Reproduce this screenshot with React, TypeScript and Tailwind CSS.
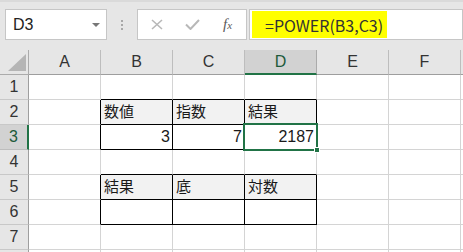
const COLS = ["A", "B", "C", "D", "E", "F", ""];
const ROWS = [1, 2, 3, 4, 5, 6, 7, 8];

// tables drawn with black borders: [firstRow, lastRow, firstCol, lastCol] (col 0 = A)
const TABLES = [
  [2, 3, 1, 3],
  [5, 6, 1, 3],
];

const DATA: Record<string, string> = {
  "2-1": "数値",
  "2-2": "指数",
  "2-3": "結果",
  "3-1": "3",
  "3-2": "7",
  "3-3": "2187",
  "5-1": "結果",
  "5-2": "底",
  "5-3": "対数",
};

const inTable = (r: number, c: number) =>
  TABLES.some(([r0, r1, c0, c1]) => r >= r0 && r <= r1 && c >= c0 && c <= c1);

const isHead = (r: number, c: number) => inTable(r, c) && (r === 2 || r === 5);

function Cell({ r, c }: { r: number; c: number }) {
  const right = inTable(r, c) || inTable(r, c + 1);
  const bottom = inTable(r, c) || inTable(r + 1, c);
  const text = DATA[`${r}-${c}`];
  const numeric = text !== undefined && /^\d+$/.test(text);
  return (
    <div
      className={[
        "w-[72px] h-[25px] shrink-0 border-r border-b flex items-center overflow-hidden",
        right ? "border-r-black" : "border-r-[#d4d4d4]",
        bottom ? "border-b-black" : "border-b-[#d4d4d4]",
        isHead(r, c) ? "bg-[#f2f2f2]" : "bg-white",
        numeric ? "justify-end pr-[2px] text-[16px]" : "justify-start pl-[3px] text-[15px]",
      ].join(" ")}
    >
      {text}
    </div>
  );
}

export default function App() {
  return (
    <div
      className="relative w-[463px] h-[252px] overflow-hidden bg-white text-[#1a1a1a]"
      style={{ fontFamily: '"Liberation Sans", "Noto Sans CJK JP", sans-serif' }}
    >
      {/* Name box + formula bar */}
      <div className="h-[50px] bg-[#e6e6e6] border-t-2 border-[#dadada] flex items-start pt-[7px]">
        <div className="ml-[5px] w-[102px] h-[31px] bg-white border border-[#c6c6c6] flex items-center justify-between pl-[7px] pr-[6px]">
          <span className="text-[16px] text-[#222]">D3</span>
          <span className="w-0 h-0 border-l-[4px] border-r-[4px] border-t-[4px] border-l-transparent border-r-transparent border-t-[#777]" />
        </div>
        <div className="w-[30px] h-[31px] flex flex-col items-center justify-center gap-[2px]">
          <span className="w-[2px] h-[2px] bg-[#a8a8a8]" />
          <span className="w-[2px] h-[2px] bg-[#a8a8a8]" />
          <span className="w-[2px] h-[2px] bg-[#a8a8a8]" />
        </div>
        <div className="w-[110px] h-[31px] bg-white border border-[#c6c6c6] flex items-center">
          <svg width="12" height="11" viewBox="0 0 12 11" className="ml-[13px]">
            <path d="M1 1 L11 10 M11 1 L1 10" stroke="#b8b8b8" strokeWidth="1.6" />
          </svg>
          <svg width="15" height="11" viewBox="0 0 15 11" className="ml-[22px]">
            <path d="M1 5.5 L5.5 10 L14 1" stroke="#b8b8b8" strokeWidth="2" fill="none" />
          </svg>
          <span
            className="ml-[23px] text-[15px] italic text-[#5a5a5a]"
            style={{ fontFamily: '"Liberation Serif", serif' }}
          >
            f<span className="text-[11px]">x</span>
          </span>
        </div>
        <div className="ml-[2px] w-[214px] h-[31px] bg-white border border-[#c6c6c6] flex items-stretch py-[1px] pl-[2px]">
          <div
            className="bg-[#ffff00] w-[135px] flex items-center pl-[13px] text-[16px] text-[#333]"
            style={{ fontFamily: '"Noto Sans CJK JP", "Liberation Sans", sans-serif' }}
          >
            =POWER(B3,C3)
          </div>
        </div>
      </div>

      {/* Column headers */}
      <div className="flex h-[25px] bg-[#e6e6e6]">
        <div className="w-[29px] shrink-0 border-r border-b border-[#ababab] relative">
          <svg width="18" height="17" viewBox="0 0 18 17" className="absolute left-[8px] top-[4px]">
            <path d="M18 0 L18 17 L0 17 Z" fill="#b5b5b5" />
          </svg>
        </div>
        {COLS.map((col, i) => (
          <div
            key={i}
            className={[
              "w-[72px] h-[25px] shrink-0 border-r flex items-center justify-center text-[16px]",
              i === 3
                ? "bg-[#d2d2d2] border-b-2 border-b-[#217346] border-r-[#ababab] text-[#1d5a3a]"
                : "border-b border-b-[#9e9e9e] border-r-[#bdbdbd] text-[#333]",
            ].join(" ")}
          >
            {col}
          </div>
        ))}
      </div>

      {/* Rows */}
      {ROWS.map((r) => (
        <div key={r} className="flex">
          <div
            className={[
              "w-[29px] h-[25px] shrink-0 border-b flex items-center justify-center text-[16px]",
              r === 3
                ? "bg-[#d2d2d2] border-r-2 border-r-[#217346] border-b-[#bdbdbd] text-[#1d5a3a]"
                : "bg-[#e6e6e6] border-r border-r-[#9e9e9e] border-b-[#c8c8c8] text-[#333]",
            ].join(" ")}
          >
            {r < 8 ? r : ""}
          </div>
          {COLS.map((_, c) => (
            <Cell key={c} r={r} c={c} />
          ))}
        </div>
      ))}

      {/* Active cell D3 */}
      <div className="absolute left-[243px] top-[123px] w-[75px] h-[28px] border-2 border-[#217346]">
        <div className="absolute right-[-4px] bottom-[-4px] w-[6px] h-[6px] bg-[#217346] border border-white" />
      </div>
    </div>
  );
}
